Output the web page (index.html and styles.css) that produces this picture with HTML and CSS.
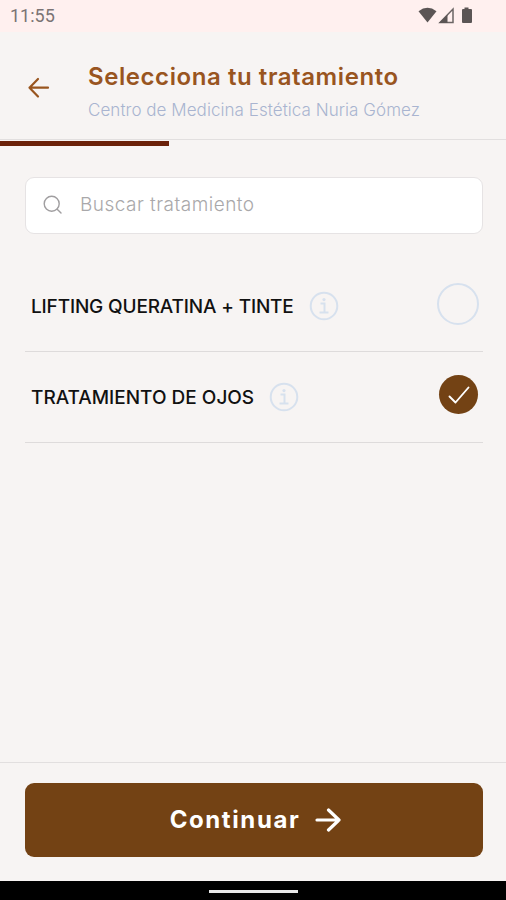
FILE: index.html
```html
<!DOCTYPE html>
<html lang="es">
<head>
  <meta charset="UTF-8" />
  <meta name="viewport" content="width=device-width, initial-scale=1.0"/>
  <title>Selecciona tu tratamiento</title>
  <link rel="stylesheet" href="styles.css">
</head>
<body>
  <div class="estado">
    <span class="hora">11:55</span>
    <svg class="estado-iconos" width="58" height="18" viewBox="0 0 58 18">
      <path d="M0.500 4.200Q9.500-2.600 18.500 4.200L9.500 15.500Z" fill="#5b5555"/>
      <path d="M22 15.500L35 2V15.500Z" fill="none" stroke="#6b6565" stroke-width="1.500"/>
      <path d="M21 16L29.500 7.500V16Z" fill="#5b5555"/>
      <path d="M46.500 0.500h4v1.500h2.500q1 0 1 1v12q0 1-1 1h-8q-1 0-1-1v-12q0-1 1-1h1.500z" fill="#5b5555"/>
    </svg>
  </div>

  <header>
    <button class="volver" aria-label="Volver">
      <svg width="24" height="24" viewBox="0 0 24 24" fill="none" stroke="#99551f" stroke-width="2.200" stroke-linecap="round" stroke-linejoin="round">
        <path d="M21 11.700H2.500M11 3L2.500 11.700L11 20.500"/>
      </svg>
    </button>
    <div class="titulos">
      <h1>Selecciona tu tratamiento</h1>
      <p>Centro de Medicina Estética Nuria Gómez</p>
    </div>
  </header>
  <div class="progreso"><div class="progreso-barra"></div></div>

  <main>
    <label class="buscador">
      <svg width="20" height="20" viewBox="0 0 20 20" fill="none" stroke="#a09ea0" stroke-width="1.400" stroke-linecap="round">
        <circle cx="8.700" cy="8.700" r="7.500"/>
        <path d="M14.200 14.200L18 18"/>
      </svg>
      <input type="text" placeholder="Buscar tratamiento">
    </label>

    <ul class="lista">
      <li class="item">
        <span class="nombre nombre-largo">LIFTING QUERATINA + TINTE</span>
        <svg class="info" width="30" height="30" viewBox="0 0 30 30" fill="none" stroke="#d7e1ee" stroke-width="2">
          <circle cx="15" cy="15" r="13.300"/>
          <path d="M11.500 12.500h4v8.500M10.500 21.500h9"/>
          <circle cx="15" cy="8.600" r="1.600" fill="#d7e1ee" stroke="none"/>
        </svg>
        <span class="check"></span>
      </li>
      <li class="item">
        <span class="nombre">TRATAMIENTO DE OJOS</span>
        <svg class="info" width="30" height="30" viewBox="0 0 30 30" fill="none" stroke="#d7e1ee" stroke-width="2">
          <circle cx="15" cy="15" r="13.300"/>
          <path d="M11.500 12.500h4v8.500M10.500 21.500h9"/>
          <circle cx="15" cy="8.600" r="1.600" fill="#d7e1ee" stroke="none"/>
        </svg>
        <span class="check check-activo">
          <svg width="24" height="20" viewBox="0 0 24 20" fill="none" stroke="#fff" stroke-width="1.900" stroke-linecap="round" stroke-linejoin="round">
            <path d="M2.500 11.500L8.500 17.500L21.500 2.500"/>
          </svg>
        </span>
      </li>
    </ul>
  </main>

  <footer>
    <button class="continuar">
      <span>Continuar</span>
      <svg width="26" height="24" viewBox="0 0 26 24" fill="none" stroke="#fff" stroke-width="3.200" stroke-linecap="round" stroke-linejoin="round">
        <path d="M2 12H24M13.500 2L24 12L13.500 22"/>
      </svg>
    </button>
  </footer>
  <div class="navegacion"><div class="navegacion-linea"></div></div>
</body>
</html>
```
FILE: styles.css
```css
* {
  box-sizing: border-box;
}
body {
  font-family: Inter, "Liberation Sans", sans-serif;
  background: #f7f4f3;
  margin: 0;
  height: 900px;
  display: flex;
  flex-direction: column;
  overflow: hidden;
}
button {
  border: none;
  background: none;
  padding: 0;
  font-family: inherit;
  cursor: pointer;
}
.estado {
  height: 32px;
  background: #fff0ef;
  display: flex;
  justify-content: space-between;
  padding: 7px 30px 0 10px;
}
.hora {
  font-family: Roboto, sans-serif;
  font-size: 18px;
  line-height: 18px;
  color: #7b7474;
}
header {
  height: 107px;
  display: flex;
  padding-left: 27px;
}
.volver {
  width: 24px;
  height: 24px;
  margin-top: 44px;
}
.volver svg {
  display: block;
}
.titulos {
  margin-left: 37px;
  white-space: nowrap;
}
h1 {
  margin: 30px 0 0;
  font-size: 24px;
  line-height: 30px;
  font-weight: 600;
  letter-spacing: 0.57px;
  color: #99551f;
}
.titulos p {
  margin: 7px 0 0;
  font-size: 17px;
  line-height: 22px;
  font-weight: 300;
  letter-spacing: 0.05px;
  color: #a9b4d0;
}
.progreso {
  height: 7px;
  border-top: 1px solid #e2dfdf;
}
.progreso-barra {
  width: 169px;
  height: 5px;
  margin-top: 1px;
  background: #6b2109;
}
main {
  flex: 1;
  padding: 31px 23px 0 25px;
}
.buscador {
  height: 57px;
  display: flex;
  align-items: center;
  padding: 0 17px 2px;
  background: white;
  border: 1px solid #e6e3e4;
  border-radius: 9px;
}
.buscador input {
  flex: 1;
  margin-left: 17px;
  padding: 0;
  border: none;
  outline: none;
  font-family: inherit;
  font-size: 19px;
  font-weight: 300;
  letter-spacing: 0.48px;
}
.buscador input::placeholder {
  color: #a9a8aa;
}
.lista {
  list-style: none;
  margin: 27px 0 0;
  padding: 0;
}
.item {
  height: 91px;
  display: flex;
  align-items: center;
  padding: 0 3px 0 6px;
  border-bottom: 1px solid #dedbdb;
}
.nombre {
  font-size: 19px;
  font-weight: 500;
  color: #111;
  white-space: nowrap;
}
.nombre-largo {
  letter-spacing: -0.16px;
}
.info {
  margin-left: 15px;
}
.check {
  width: 42px;
  height: 42px;
  margin: -5px 1px 0 auto;
  border: 2px solid #d7e1ee;
  border-radius: 50%;
}
.check-activo {
  width: 39px;
  height: 39px;
  margin-right: 2px;
  border: none;
  background: #734214;
  display: flex;
  align-items: center;
  justify-content: center;
}
footer {
  height: 119px;
  padding: 20px 23px 0 25px;
  border-top: 1px solid #e2dfdf;
}
.continuar {
  width: 100%;
  height: 74px;
  display: flex;
  align-items: center;
  justify-content: center;
  gap: 15px;
  padding: 0 0 1px 3px;
  background: #734214;
  border-radius: 9px;
  color: white;
  font-size: 24px;
  font-weight: 700;
  letter-spacing: 1.6px;
}
.navegacion {
  height: 19px;
  background: black;
  display: flex;
  justify-content: center;
  padding-top: 9px;
}
.navegacion-linea {
  width: 89px;
  height: 3px;
  background: #e8e8e8;
}
```
